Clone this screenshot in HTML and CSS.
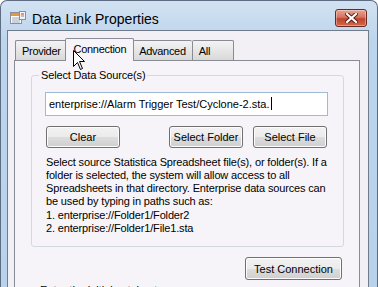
FILE: index.html
```html
<!DOCTYPE html>
<html lang="en">
<head>
  <meta charset="UTF-8" />
  <title>Data Link Properties</title>
  <link rel="stylesheet" href="styles.css">
</head>
<body>

  <div class="window">
    <div class="titlebar">
      <svg class="app-icon" width="16" height="14" viewBox="0 0 16 14">
        <rect x="0.5" y="1.5" width="11" height="11" fill="#fff" stroke="#8a8f99"/>
        <rect x="1" y="2" width="10" height="3" fill="#e8963a"/>
        <line x1="2" y1="7" x2="10" y2="7" stroke="#9aa6b6"/>
        <line x1="2" y1="9" x2="10" y2="9" stroke="#9aa6b6"/>
        <line x1="2" y1="11" x2="10" y2="11" stroke="#9aa6b6"/>
        <rect x="9.5" y="0.5" width="6" height="8" fill="#f4f4f4" stroke="#8a8f99"/>
        <line x1="11" y1="3" x2="14" y2="3" stroke="#c23b2b"/>
        <line x1="11" y1="5" x2="14" y2="5" stroke="#7a8aa0"/>
      </svg>
      <span class="title">Data Link Properties</span>
      <button class="close" aria-label="Close">
        <svg width="13" height="10" viewBox="0 0 13 10">
          <path d="M2 1 L11 9 M11 1 L2 9" stroke="#5a1a10" stroke-width="4" stroke-linecap="square"/>
          <path d="M2 1 L11 9 M11 1 L2 9" stroke="#fff" stroke-width="2.2" stroke-linecap="square"/>
        </svg>
      </button>
    </div>

    <div class="client">
      <div class="tabs">
        <div class="tab">Provider</div>
        <div class="tab active">Connection</div>
        <div class="tab">Advanced</div>
        <div class="tab">All</div>
      </div>

      <div class="panel">
        <fieldset class="group">
          <legend>Select Data Source(s)</legend>
          <div class="field">enterprise://Alarm Trigger Test/Cyclone-2.sta.<span class="caret"></span></div>

          <div class="btn-row">
            <button class="btn">Clear</button>
            <div class="btn-group">
              <button class="btn">Select Folder</button>
              <button class="btn">Select File</button>
            </div>
          </div>

          <p class="help">Select source Statistica Spreadsheet file(s), or folder(s). If a folder is selected, the system will allow access to all Spreadsheets in that directory. Enterprise data sources can<br>be used by typing in paths such as:</p>
          <ol class="paths">
            <li>enterprise://Folder1/Folder2</li>
            <li>enterprise://Folder1/File1.sta</li>
          </ol>
        </fieldset>

        <div class="test-row">
          <button class="btn test">Test Connection</button>
        </div>

        <div class="next-label">Enter the initial catalog to use:</div>
      </div>
    </div>

    <svg class="cursor" width="13" height="21" viewBox="0 0 13 21">
      <path d="M0.5 0.5 L0.5 16.5 L4.5 12.5 L7.5 19.5 L9.5 18.5 L6.5 11.5 L11.5 11.5 Z" fill="#fff" stroke="#000"/>
    </svg>
  </div>

</body>
</html>
```

FILE: styles.css
```css
body {
  margin: 0;
  background: #fff;
  font-family: "Liberation Sans", Arial, sans-serif;
  font-size: 11px;
  color: #000;
}

.window {
  position: relative;
  width: 378px;
  height: 287px;
  box-sizing: border-box;
  border: 1px solid #5d6e82;
  border-bottom: none;
  border-radius: 7px 7px 0 0;
  background: linear-gradient(#d3e2f2, #bcd4ec 40px, #b9d2ec);
  overflow: hidden;
  display: flex;
  flex-direction: column;
}

.titlebar {
  height: 29px;
  display: flex;
  align-items: center;
  padding-left: 9px;
  flex-shrink: 0;
}

.app-icon {
  margin-top: 4px;
}

.title {
  margin-left: 6px;
  margin-top: 7px;
  font-size: 14px;
  color: #000;
}

.close {
  margin-left: auto;
  margin-right: 10px;
  margin-top: 5px;
  width: 32px;
  height: 18px;
  padding: 0;
  border: 1px solid #6b2a20;
  border-radius: 3px;
  background: linear-gradient(#e8a394, #d6745f 45%, #c2432b 55%, #d06a4f);
  box-shadow: inset 0 0 0 1px rgba(255, 255, 255, 0.35);
  display: flex;
  align-items: center;
  justify-content: center;
}

.client {
  flex: 1;
  margin: 0 8px 0 6px;
  border: 1px solid #6f7c8b;
  border-bottom: none;
  background: #f2f0f4;
  padding: 0 8px 0 6px;
  display: flex;
  flex-direction: column;
}

.tabs {
  display: flex;
  align-items: flex-end;
  margin-top: 7px;
  padding-left: 1px;
  position: relative;
  z-index: 1;
  letter-spacing: -0.3px;
}

.tab {
  height: 19px;
  line-height: 20px;
  padding: 0 6px;
  border: 1px solid #898c95;
  border-bottom: none;
  border-right: none;
  border-radius: 2px 2px 0 0;
  background: linear-gradient(#f3f3f3, #e6e6e6 50%, #d9d9d9);
}

.tab:last-child {
  border-right: 1px solid #898c95;
  padding-right: 23px;
}

.tab.active {
  height: 22px;
  line-height: 20px;
  margin: 0 -1px -1px -2px;
  padding: 0 7px 0 8px;
  border-right: 1px solid #898c95;
  background: #f6f4f8;
  position: relative;
}

.tab.active + .tab {
  border-left: none;
}

.panel {
  flex: 1;
  border: 1px solid #898c95;
  border-bottom: none;
  background: #f6f4f8;
  padding: 8px 15px 0 16px;
}

.group {
  margin: 0;
  padding: 10px 10px 11px 13px;
  border: 1px solid #d5d9df;
  border-radius: 3px;
}

.group legend {
  margin-left: -6px;
  padding: 0 2px;
  line-height: 13px;
  letter-spacing: -0.15px;
}

.field {
  height: 22px;
  line-height: 22px;
  margin-right: 5px;
  border: 1px solid #9fbad6;
  background: #fff;
  padding: 0 3px;
  white-space: nowrap;
}

.caret {
  display: inline-block;
  width: 1px;
  height: 13px;
  background: #000;
  vertical-align: -2px;
  margin-left: 1px;
}

.btn-row {
  display: flex;
  justify-content: space-between;
  margin: 10px 6px 0 1px;
}

.btn-group {
  display: flex;
  gap: 10px;
}

.btn {
  height: 22px;
  width: 74px;
  padding: 0;
  border: 1px solid #707070;
  border-radius: 3px;
  background: linear-gradient(#f2f2f2, #ebebeb 50%, #dddddd 51%, #cfcfcf);
  box-shadow: inset 0 0 0 1px #fcfcfc;
  font-family: "Liberation Sans", Arial, sans-serif;
  font-size: 11px;
  color: #000;
}

.help {
  margin: 8px 0 0 1px;
  line-height: 13px;
  letter-spacing: -0.15px;
}

.paths {
  margin: 1px 0 0 1px;
  padding: 0;
  list-style: none;
  counter-reset: item;
  letter-spacing: -0.15px;
}

.paths li {
  line-height: 13px;
  counter-increment: item;
}

.paths li::before {
  content: counter(item) ". ";
}

.test-row {
  display: flex;
  justify-content: flex-end;
  margin: 10px 2px 0 0;
}

.btn.test {
  height: 23px;
  width: 97px;
}

.next-label {
  margin: 4px 0 0 9px;
}

.cursor {
  position: absolute;
  left: 72px;
  top: 49px;
  z-index: 5;
}
```
